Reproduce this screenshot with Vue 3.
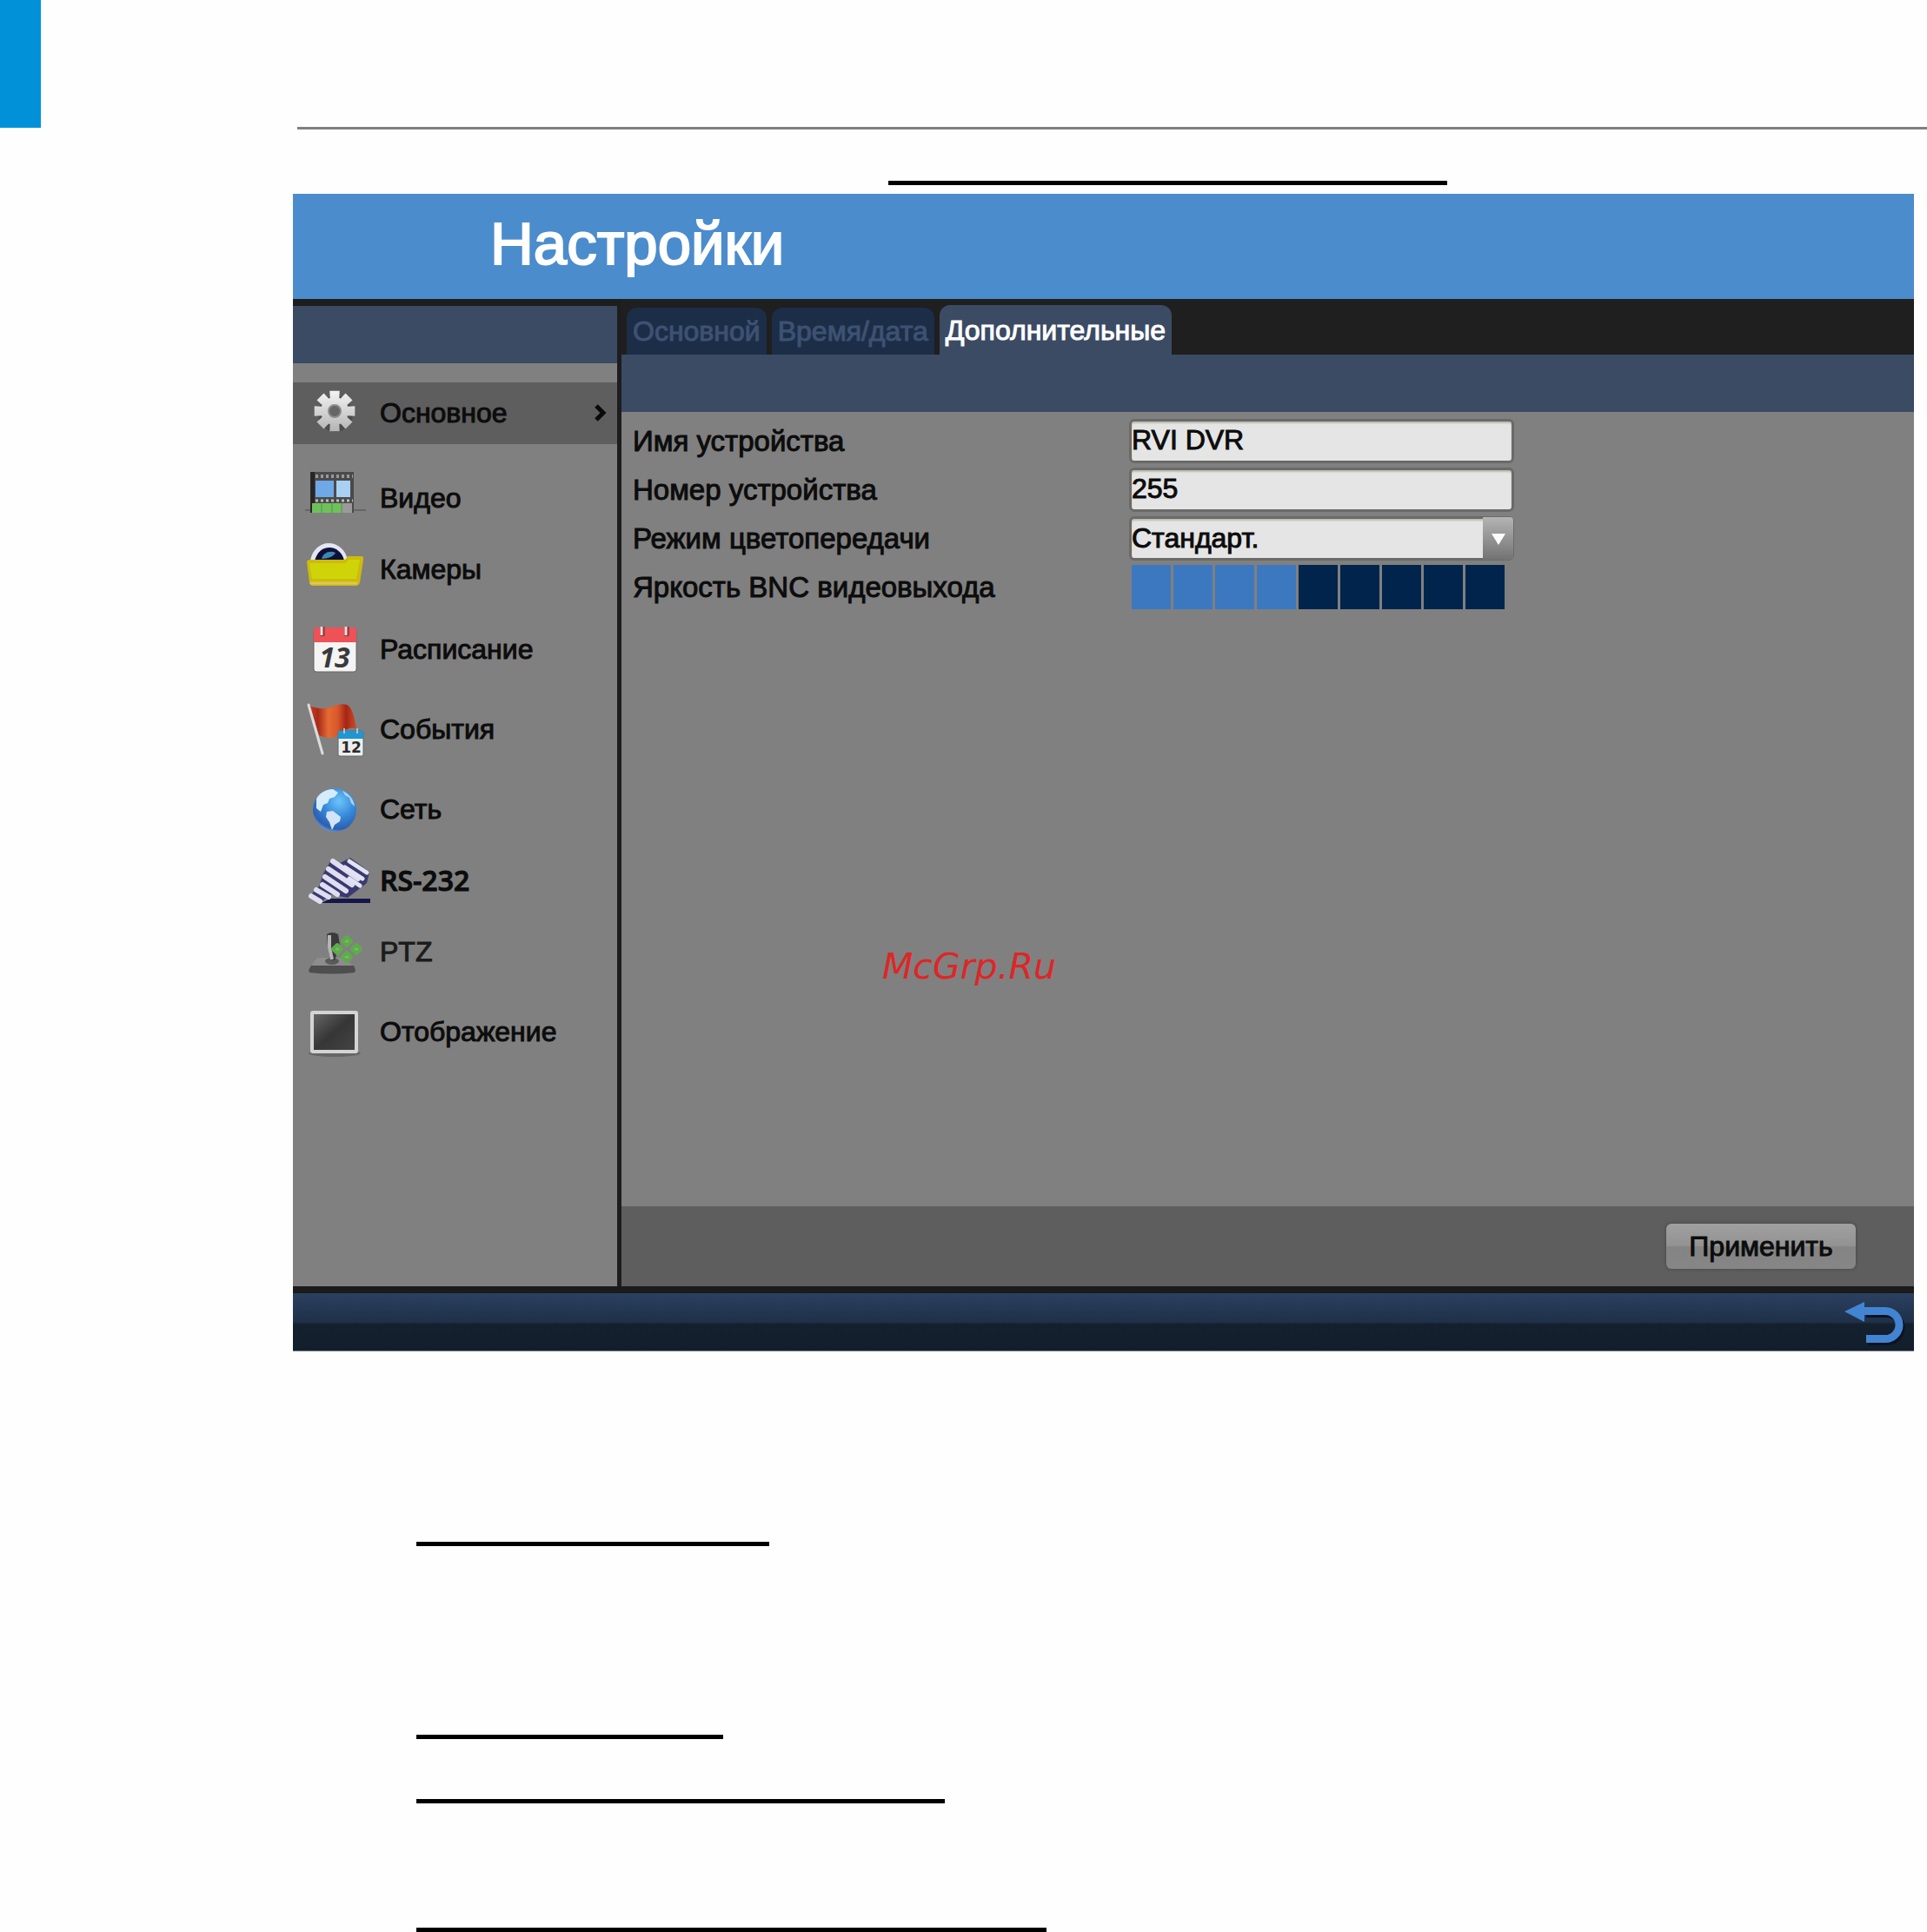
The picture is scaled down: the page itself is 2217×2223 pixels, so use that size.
<template>
  <div class="page">
    <div class="page_head">
      <div class="mark"></div>
      <hr class="head_line" />
    </div>
    <hr class="rule caption" />

    <div class="dvr">
      <header class="title">
        <h1>Настройки</h1>
      </header>

      <div class="body">
        <nav class="sidebar">
          <div class="strip"></div>
          <ul class="menu">
            <li
              v-for="item in menu"
              :key="item.icon"
              :class="{ active: item.icon === current, compact: item.compact }"
            >
              <button
                type="button"
                class="menu_item"
                @click="current = item.icon"
              >
                <svg class="icon" viewBox="0 0 72 60" aria-hidden="true">
                  <g v-if="item.icon === 'general'">
                    <defs>
                      <linearGradient id="gear" x1="0" y1="0" x2="0" y2="1">
                        <stop offset="0" stop-color="#f4f4f4" />
                        <stop offset="1" stop-color="#b4b4b4" />
                      </linearGradient>
                    </defs>
                    <ellipse cx="36" cy="31" rx="20" ry="21" fill="#4c4c4c" />
                    <path :d="gearPath" fill="url(#gear)" />
                    <circle
                      cx="35"
                      cy="28"
                      r="7"
                      fill="#666"
                      stroke="#8c8c8c"
                      stroke-width="2"
                    />
                  </g>
                  <g v-else-if="item.icon === 'video'">
                    <path d="M1 44h70" stroke="#666" stroke-width="2" />
                    <rect x="7" y="0" width="50" height="47" fill="#4a4a4a" />
                    <rect x="7" y="0" width="5" height="47" fill="#262626" />
                    <path
                      d="M13 5h43"
                      stroke="#999"
                      stroke-width="4"
                      stroke-dasharray="3 3"
                    />
                    <path
                      d="M13 33h43"
                      stroke="#bbb"
                      stroke-width="3"
                      stroke-dasharray="3 3"
                    />
                    <rect x="13" y="10" width="21" height="19" fill="#6ea8e6" />
                    <rect x="37" y="10" width="16" height="19" fill="#a9cff2" />
                    <rect x="9" y="36" width="34" height="11" fill="#6fc05c" />
                    <rect x="43" y="36" width="12" height="11" fill="#9a9a9a" />
                    <path
                      d="M20 36v11M32 36v11M43 36v11"
                      stroke="#4c9a42"
                      stroke-width="1"
                    />
                  </g>
                  <g v-else-if="item.icon === 'camera'">
                    <path d="M7 20C9 8 18 0 28 0s20 7 22 20z" fill="#e4e6f4" />
                    <path d="M12 20C15 10 21 5 29 5s15 6 17 15z" fill="#0d1038" />
                    <path d="M20 18c2-7 9-10 16-7-2 4-8 7-16 7z" fill="#3f86b4" />
                    <path
                      d="M3 22q0-3 4-3h40l3-4h16q3 0 2 4l-4 26q-1 4-5 4H11q-5 0-5-4z"
                      fill="#cdbb0c"
                    />
                    <path d="M6 23h42l3-4h13l-4 22H9z" fill="#cfd408" />
                    <path
                      d="M8 46h52"
                      stroke="#ddc65c"
                      stroke-width="3"
                      stroke-linecap="round"
                    />
                  </g>
                  <g v-else-if="item.icon === 'schedule'">
                    <rect
                      x="11"
                      y="6"
                      width="49"
                      height="50"
                      rx="3"
                      fill="#f4f4f4"
                      stroke="#6b6262"
                      stroke-width="1"
                    />
                    <path d="M11 8q0-3 3-3h43q3 0 3 3v14H11z" fill="#ee5156" />
                    <path d="M21 4v11M49 4v11" stroke="#7d3a3a" stroke-width="5" />
                    <path d="M20 4v10M48 4v10" stroke="#e8dcdc" stroke-width="3" />
                    <text
                      x="35"
                      y="51"
                      class="day"
                      font-size="32"
                      text-anchor="middle"
                    >13</text>
                  </g>
                  <g v-else-if="item.icon === 'events'">
                    <defs>
                      <linearGradient id="flag" x1="0" y1="0" x2="1" y2="0">
                        <stop offset="0" stop-color="#cf3c1c" />
                        <stop offset="0.18" stop-color="#a82a18" />
                        <stop offset="0.4" stop-color="#e56a33" />
                        <stop offset="0.6" stop-color="#d9582c" />
                        <stop offset="0.78" stop-color="#a32616" />
                        <stop offset="1" stop-color="#d04a22" />
                      </linearGradient>
                    </defs>
                    <path
                      d="M6 3C16 7 24 7 32 4S48 0 52 4c4 5 6 14 8 26-7-4-13 1-19 6-7 5-14 5-24 1C13 25 10 13 6 3z"
                      fill="url(#flag)"
                    />
                    <path
                      d="M5 2l16 56"
                      stroke="#dcdcdc"
                      stroke-width="3"
                      stroke-linecap="round"
                    />
                    <rect
                      x="39"
                      y="32"
                      width="29"
                      height="29"
                      rx="2"
                      fill="#eee"
                      stroke="#5d6870"
                    />
                    <path d="M39 32h29v9H39z" fill="#1f97d2" />
                    <path
                      d="M46 29v6M61 29v6"
                      stroke="#a8c6d6"
                      stroke-width="2"
                    />
                    <text
                      x="54"
                      y="57"
                      class="small_day"
                      font-size="17"
                      text-anchor="middle"
                    >12</text>
                  </g>
                  <g v-else-if="item.icon === 'network'">
                    <defs>
                      <radialGradient id="globe" cx="0.6" cy="0.3" r="0.75">
                        <stop offset="0" stop-color="#6cc4fa" />
                        <stop offset="0.5" stop-color="#3587d8" />
                        <stop offset="0.85" stop-color="#2c5fb0" />
                        <stop offset="1" stop-color="#79a4dc" />
                      </radialGradient>
                    </defs>
                    <circle cx="35" cy="31" r="25" fill="url(#globe)" />
                    <path
                      d="M14 18c4-7 11-11 19-11l6 4-4 5-6 2-2 5-5 2-3 8-5-4z"
                      fill="#d6ebfb"
                    />
                    <path
                      d="M26 33l7-1 9 7-1 5-6 4-3 6-3-9-4-6z"
                      fill="#d3e4f6"
                    />
                    <path d="M44 9c7 3 13 9 14 18l-4-4-2-6-5-3z" fill="#a8d4f5" />
                  </g>
                  <g v-else-if="item.icon === 'serial'">
                    <path d="M20 56H76v-5H30z" fill="#15164a" />
                    <path
                      d="M5 49l12-12 5-15 10-17 9 5 12-6 22 16-3 13-22 17-20-4-12 10z"
                      fill="#3a3a70"
                    />
                    <path
                      d="M33 8l29 20M28 17l27 18M24 26l24 16M21 35l17 11M14 41l14 8M8 48l10 6"
                      stroke="#dedef0"
                      stroke-width="6"
                      stroke-linecap="round"
                    />
                    <path
                      d="M52 8l20 13M47 15l20 13M52 28l12 8"
                      stroke="#e2e2f4"
                      stroke-width="5"
                      stroke-linecap="round"
                    />
                  </g>
                  <g v-else-if="item.icon === 'ptz'">
                    <path d="M15 37h32l12 13H5z" fill="#8d8d8d" />
                    <path d="M8 46h49l2 5-1 3q-25 3-52 0l-1-3z" fill="#4e4e4e" />
                    <ellipse cx="32" cy="41" rx="8" ry="4" fill="#5a5a5a" />
                    <path d="M26 10q6-4 13 0l2 12-6 18h-5l-3-16z" fill="#3a3a3a" />
                    <path
                      d="M29 11v14l3 14"
                      stroke="#b5b5b5"
                      stroke-width="4"
                      fill="none"
                    />
                    <path
                      d="M49 13l5 5-5 5-5-5zM38 22l5 5-5 5-5-5zM60 22l5 5-5 5-5-5zM49 31l5 5-5 5-5-5z"
                      fill="#74c05c"
                      stroke="#5fab4b"
                      stroke-width="4"
                      stroke-linejoin="round"
                    />
                  </g>
                  <g v-else>
                    <defs>
                      <linearGradient id="screen" x1="0" y1="0" x2="1" y2="1">
                        <stop offset="0" stop-color="#6a6a6a" />
                        <stop offset="0.5" stop-color="#363636" />
                        <stop offset="1" stop-color="#454545" />
                      </linearGradient>
                    </defs>
                    <ellipse cx="35" cy="55" rx="30" ry="4" fill="#666" />
                    <rect
                      x="9"
                      y="8"
                      width="51"
                      height="45"
                      rx="1"
                      fill="url(#screen)"
                      stroke="#d4d4d4"
                      stroke-width="4"
                    />
                  </g>
                </svg>
                <span class="menu_label" :class="item.icon">{{ item.label }}</span>
                <svg
                  v-if="item.icon === current"
                  class="chevron"
                  viewBox="0 0 14 20"
                  aria-hidden="true"
                >
                  <path
                    d="M2 2l8 8-8 8"
                    fill="none"
                    stroke="#0a0a0a"
                    stroke-width="5"
                  />
                </svg>
              </button>
            </li>
          </ul>
        </nav>

        <main class="main">
          <div class="tabs" role="tablist">
            <button
              v-for="(name, i) in tabs"
              :key="name"
              type="button"
              role="tab"
              class="tab"
              :class="{ active: i === tab }"
              :aria-selected="i === tab"
              @click="tab = i"
            >
              {{ name }}
            </button>
          </div>
          <div class="strip"></div>

          <form class="form" @submit.prevent>
            <label for="device-name">Имя устройства</label>
            <input id="device-name" v-model="deviceName" class="field" type="text" />

            <label for="device-number">Номер устройства</label>
            <input id="device-number" v-model="deviceNumber" class="field" type="text" />

            <label for="color-mode">Режим цветопередачи</label>
            <div class="select">
              <select id="color-mode" v-model="colorMode" class="field">
                <option>Стандарт.</option>
              </select>
              <span class="arrow">
                <svg viewBox="0 0 16 14" aria-hidden="true">
                  <path d="M0 1h16L8 14z" fill="#fff" />
                </svg>
              </span>
            </div>

            <label for="brightness">Яркость BNC видеовыхода</label>
            <input
              id="brightness"
              v-model="brightness"
              class="level"
              type="range"
              min="0"
              max="9"
              :style="{ '--filled': brightness * 48 + 'px' }"
            />
          </form>

          <div class="actions">
            <button type="button" class="apply">Применить</button>
          </div>
        </main>
      </div>

      <footer class="bottom">
        <button type="button" class="back" aria-label="Назад">
          <svg viewBox="0 0 72 56" aria-hidden="true">
            <g transform="translate(2 3)" fill="none" stroke="#0b1320">
              <path d="M24 15.5H48a16 16 0 0 1 0 32H26" stroke-width="9" />
            </g>
            <path d="M1 16L24 5v23z" fill="#4384d2" />
            <path
              d="M22 15.5H48a16 16 0 0 1 0 32H26"
              fill="none"
              stroke="#4384d2"
              stroke-width="9"
            />
          </svg>
        </button>
      </footer>

      <span class="watermark">McGrp.Ru</span>
    </div>

    <div class="notes">
      <hr class="rule first" />
      <hr class="rule second" />
      <hr class="rule third" />
      <hr class="rule fourth" />
    </div>
  </div>
</template>

<script setup>
import { ref } from "vue";

const menu = [
  { icon: "general", label: "Основное" },
  { icon: "video", label: "Видео" },
  { icon: "camera", label: "Камеры", compact: true },
  { icon: "schedule", label: "Расписание" },
  { icon: "events", label: "События" },
  { icon: "network", label: "Сеть" },
  { icon: "serial", label: "RS-232", compact: true },
  { icon: "ptz", label: "PTZ", compact: true },
  { icon: "display", label: "Отображение" },
];
const tabs = ["Основной", "Время/дата", "Дополнительные"];

const current = ref("general");
const tab = ref(2);
const deviceName = ref("RVI DVR");
const deviceNumber = ref("255");
const colorMode = ref("Стандарт.");
const brightness = ref(4);

// eight square teeth around the hub
const makeGear = (cx, cy, outer, inner) => {
  const points = [];
  for (let i = 0; i < 8; i++) {
    const a = (i * Math.PI) / 4 - Math.PI / 2;
    [
      [inner, -0.34],
      [outer, -0.24],
      [outer, 0.24],
      [inner, 0.34],
    ].forEach(([r, d]) => {
      const x = cx + r * Math.cos(a + d);
      const y = cy + r * Math.sin(a + d);
      points.push(x.toFixed(1) + " " + y.toFixed(1));
    });
  }
  return "M" + points.join("L") + "Z";
};
const gearPath = makeGear(35, 28, 24, 16);
</script>

<style>
body {
  background: #fefefe;
}
</style>

<style scoped>
.page {
  font-family: "Liberation Sans", Arial, sans-serif;
  font-size: 32px;
  line-height: 40px;
  color: #0c0c0c;
}
button,
input,
select {
  font: inherit;
  color: inherit;
  margin: 0;
  border: 0;
  border-radius: 0;
  outline: 0;
}
.page_head {
  display: flex;
  align-items: flex-end;
  height: 149px;
}
.mark {
  align-self: flex-start;
  width: 47px;
  height: 147px;
  background: #0091d9;
}
.head_line {
  flex: 1;
  height: 3px;
  margin: 0 0 0 295px;
  border: 0;
  background: #808080;
}
.rule {
  height: 5px;
  margin: 0;
  border: 0;
  background: #000;
}
.rule.caption {
  width: 643px;
  margin: 59px 0 10px 1022px;
}
.dvr {
  position: relative;
  margin: 0 15px 0 337px;
}
.title {
  box-sizing: border-box;
  display: flex;
  align-items: center;
  height: 121px;
  padding: 0 0 6px 227px;
  background: #4b8ccd;
}
.title h1 {
  margin: 0;
  font-size: 69px;
  line-height: 80px;
  font-weight: normal;
  color: #fff;
  -webkit-text-stroke: 2px #fff;
}
.body {
  display: grid;
  grid-template-columns: 373px 1fr;
  column-gap: 5px;
  background: #1d1d1d;
}
.sidebar {
  margin-top: 8px;
  background: #808080;
}
.strip {
  height: 66px;
  background: #3b4b64;
}
.menu {
  list-style: none;
  margin: 0;
  padding: 22px 0 0;
}
.menu li + li {
  margin-top: 32px;
}
.menu li.compact {
  margin-top: 22px;
}
.menu_item {
  display: flex;
  align-items: center;
  gap: 15px;
  width: 100%;
  height: 60px;
  padding: 0 12px 0 13px;
  background: none;
  text-align: left;
}
.menu li.active .menu_item {
  height: 71px;
  padding-bottom: 2px;
  background: #5e5e5e;
}
.icon {
  flex: none;
  width: 72px;
  height: 60px;
  overflow: visible;
}
.day {
  font-family: "Open Sans", sans-serif;
  font-style: italic;
  font-weight: bold;
  fill: #3a3a3a;
}
.small_day {
  font-family: "DejaVu Sans", sans-serif;
  font-weight: bold;
  fill: #2c2c2c;
}
.menu_label {
  flex: 1;
  -webkit-text-stroke: 1px #0c0c0c;
}
.menu_label.serial {
  font-family: "Open Sans", sans-serif;
  font-weight: 600;
}
.menu_label.ptz {
  color: #1c1c1c;
  -webkit-text-stroke: 1px #1c1c1c;
}
.chevron {
  width: 14px;
  height: 20px;
}
.main {
  display: flex;
  flex-direction: column;
  background: #808080;
}
.tabs {
  display: flex;
  align-items: flex-end;
  gap: 6px;
  height: 64px;
  padding-left: 6px;
  background: #1f1f1f;
}
.tab {
  height: 54px;
  padding: 0 7px;
  border-radius: 12px 12px 0 0;
  background: #1c2d47;
  color: #3d5272;
  -webkit-text-stroke: 1px #3d5272;
}
.tab.active {
  height: 57px;
  background: #3b4b64;
  color: #fff;
  -webkit-text-stroke: 1px #fff;
}
.form {
  flex: 1;
  display: grid;
  grid-template-columns: 571px 443px;
  grid-auto-rows: 51px;
  row-gap: 5px;
  align-items: center;
  min-height: 906px;
  padding: 8px 0 0 13px;
}
.form label {
  font-size: 33px;
  -webkit-text-stroke: 1px #0c0c0c;
}
.field {
  box-sizing: border-box;
  width: 100%;
  height: 51px;
  padding: 0 0 2px;
  border: 3px solid #6a6a68;
  border-radius: 6px;
  background: #e5e5e5;
  box-shadow: inset 0 2px 2px #b9bab0;
  -webkit-text-stroke: 1px #0c0c0c;
}
.select {
  position: relative;
}
.select .field {
  display: block;
  appearance: none;
}
.arrow {
  position: absolute;
  top: 1px;
  right: 1px;
  bottom: 1px;
  display: flex;
  align-items: center;
  justify-content: center;
  width: 35px;
  border-radius: 0 4px 4px 0;
  background: linear-gradient(#b4b4b4, #737373);
  pointer-events: none;
}
.arrow svg {
  width: 16px;
  height: 14px;
}
.level {
  appearance: none;
  width: 429px;
  height: 51px;
  margin-left: 3px;
  background:
    repeating-linear-gradient(
      90deg,
      transparent 0 45px,
      #808080 45px 48px
    ),
    linear-gradient(
      90deg,
      #3c78c0 var(--filled),
      #00244c var(--filled)
    );
}
.level::-webkit-slider-thumb {
  appearance: none;
  width: 1px;
  height: 51px;
  background: transparent;
}
.actions {
  display: flex;
  align-items: center;
  justify-content: flex-end;
  height: 92px;
  padding-right: 67px;
  background: #5e5e5e;
}
.apply {
  width: 218px;
  height: 52px;
  padding: 0;
  border-radius: 6px;
  background: linear-gradient(#a0a0a0, #929292 50%, #848484 51%, #868686);
  box-shadow: 0 0 3px 1px #4c4c4c;
  -webkit-text-stroke: 1px #0c0c0c;
}
.bottom {
  display: flex;
  align-items: center;
  justify-content: flex-end;
  height: 66px;
  padding-right: 9px;
  border-top: 8px solid #1b1b1b;
  border-bottom: 1px solid #7d848e;
  background: linear-gradient(#2b4160, #1f3048 50%, #15202f 54%, #131e2c);
}
.back {
  height: 56px;
  padding: 0;
  background: none;
}
.back svg {
  display: block;
  width: 72px;
  height: 56px;
}
.watermark {
  position: absolute;
  top: 865px;
  left: 678px;
  font-family: "DejaVu Sans", sans-serif;
  font-style: italic;
  font-size: 41px;
  line-height: 48px;
  color: #de2626;
}
.notes {
  padding: 219px 0 0 479px;
}
.rule.first {
  width: 406px;
}
.rule.second {
  width: 353px;
  margin-top: 217px;
}
.rule.third {
  width: 608px;
  margin-top: 69px;
}
.rule.fourth {
  width: 725px;
  margin-top: 143px;
}
</style>
